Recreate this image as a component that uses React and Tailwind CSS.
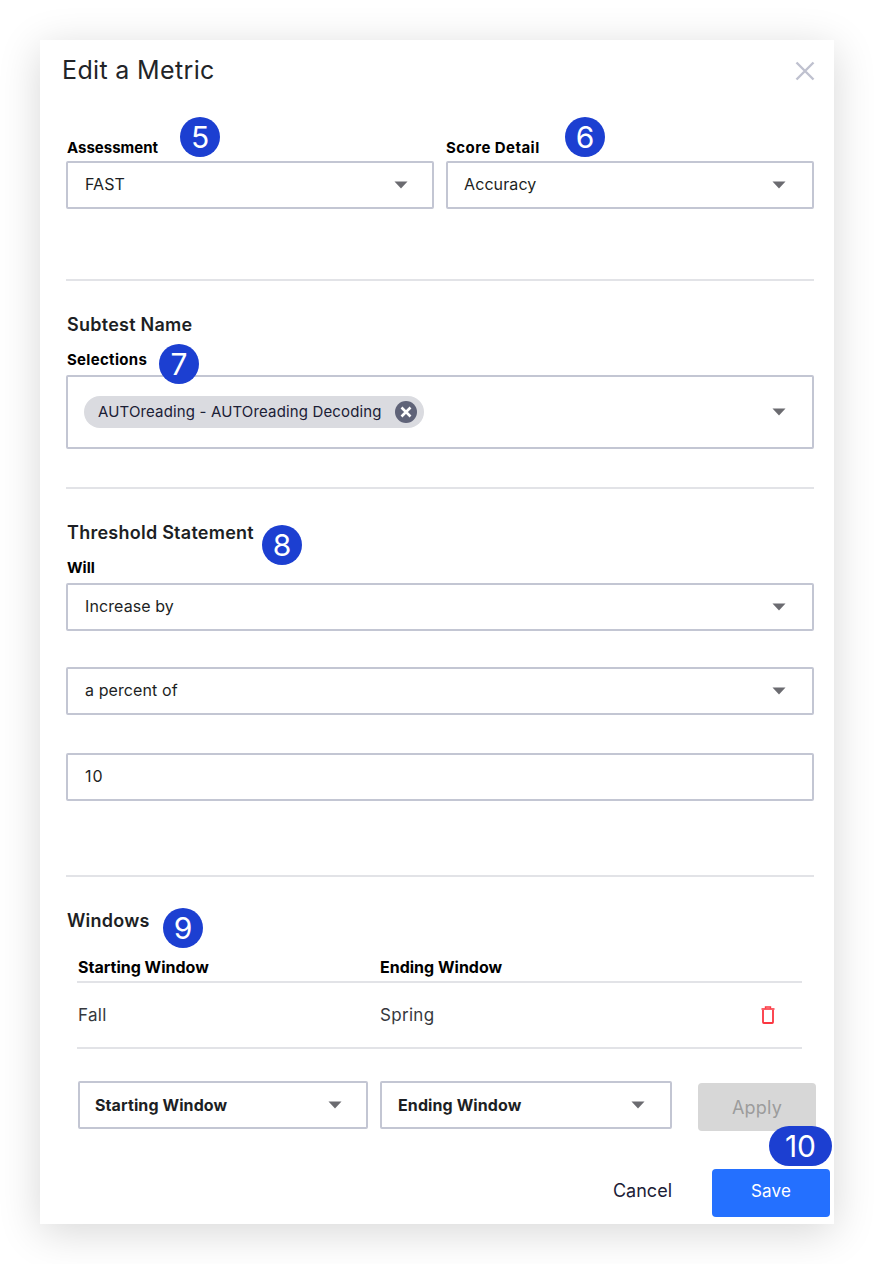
const font = "font-['Inter','Noto_Sans',sans-serif]";
const labelCls = "relative block text-[15px] font-bold leading-[18px] text-black";
const headCls = "pl-px text-[18px] font-semibold leading-5 tracking-[0.25px] text-[#1d1f24]";

function Caret() {
  return (
    <svg width="14" height="8" viewBox="0 0 14 8" className="shrink-0" aria-hidden="true">
      <path d="M0.5 0.5H13.5L7 7.5Z" fill="#6b6b70" />
    </svg>
  );
}

function Select({ value, bold = false, className = "" }) {
  return (
    <div className={`flex h-12 shrink-0 items-center justify-between rounded-[2px] border-2 border-[#c3c6d3] bg-white ${className}`}>
      {bold ? (
        <span className="relative text-[16px] font-bold tracking-[0.1px] text-[#1d1f24]">{value}</span>
      ) : (
        <span className="relative top-[-1px] text-[16px] tracking-[0.1px] text-[#1d1f24]">{value}</span>
      )}
      <Caret />
    </div>
  );
}

function Badge({ n, className = "" }) {
  return (
    <span className={`absolute flex h-10 items-center justify-center rounded-full bg-[#1c3fd1] text-[30px] leading-none text-white ${n === 10 ? "w-[63px]" : "w-10"} ${className}`}>
      {n}
    </span>
  );
}

function Divider({ className = "" }) {
  return <div className={`h-[2px] bg-[#e2e3e7] ${className}`} />;
}

export default function App() {
  return (
    <div className={`h-[1264px] w-[874px] overflow-hidden bg-white pl-10 pt-10 ${font}`}>
      <div className="relative h-[1184px] w-[794px] bg-white shadow-[0_8px_40px_rgba(0,0,0,0.16)]">
        <header className="flex h-[61px] items-center justify-between pl-[22px] pr-[19px]">
          <h1 className="text-[25px] font-normal tracking-[0.35px] text-[#222428]">Edit a Metric</h1>
          <svg width="20" height="20" viewBox="0 0 20 20" aria-label="Close">
            <path d="M1.5 1.5L18.5 18.5M18.5 1.5L1.5 18.5" stroke="#bfc1cf" strokeWidth="2.4" />
          </svg>
        </header>

        <div className="pl-[26px] pr-5">
          <div className="mt-[38px] grid grid-cols-[368px_368px] gap-3">
            <div>
              <label className={`mb-[4px] pl-px ${labelCls}`}>Assessment</label>
              <Select value="FAST" className="pl-[17px] pr-6" />
            </div>
            <div>
              <label className={`mb-[4px] tracking-[0.45px] ${labelCls}`}>Score Detail</label>
              <Select value="Accuracy" className="pl-4 pr-[26px]" />
            </div>
          </div>

          <Divider className="mt-[70px]" />

          <h2 className={`mt-[34px] ${headCls}`}>Subtest Name</h2>
          <label className={`mt-4 mb-[6px] pl-px tracking-[0.3px] ${labelCls}`}>Selections</label>
          <div className="flex h-[74px] items-center justify-between rounded-[2px] border-2 border-[#c3c6d3] pl-4 pr-[26px]">
            <span className="relative flex h-8 items-center gap-[13px] rounded-full bg-[#dadbe0] pl-[14px] pr-[7px] text-[15px] tracking-[0.15px] text-[#1b2036]">
              AUTOreading - AUTOreading Decoding
              <svg width="22" height="22" viewBox="0 0 22 22" aria-label="Remove">
                <circle cx="11" cy="11" r="11" fill="#5f6378" />
                <path d="M6.5 6.5L15.5 15.5M15.5 6.5L6.5 15.5" stroke="#fff" strokeWidth="2.6" />
              </svg>
            </span>
            <Caret />
          </div>

          <Divider className="mt-[38px]" />

          <h2 className={`mt-[34px] ${headCls}`}>Threshold Statement</h2>
          <label className={`mt-4 mb-[6px] pl-px ${labelCls}`}>Will</label>
          <Select value="Increase by" className="pl-[17px] pr-[26px]" />
          <Select value="a percent of" className="mt-9 pl-[17px] pr-[26px]" />
          <div className="mt-[38px] flex h-12 items-center rounded-[2px] border-2 border-[#c3c6d3] pl-[17px]">
            <span className="relative top-[-1px] text-[16px] tracking-[1px] text-[#1d1f24]">10</span>
          </div>

          <Divider className="mt-[74px]" />

          <h2 className={`mt-[34px] ${headCls}`}>Windows</h2>

          <div className="ml-[11px] mr-[12px] mt-[24px]">
            <div className="grid h-[15px] grid-cols-[302px_1fr] items-center pl-px text-[16px] font-bold text-black">
              <span>Starting Window</span>
              <span>Ending Window</span>
            </div>
            <Divider className="mt-[11px]" />
            <div className="grid h-[64px] grid-cols-[302px_1fr_auto] items-center pl-px pr-[27px] text-[17px] tracking-[0.3px] text-[#36383d]">
              <span className="relative top-px">Fall</span>
              <span className="relative top-px">Spring</span>
              <svg width="14" height="18" viewBox="0 0 14 18" fill="none" aria-label="Delete">
                <path d="M0.5 3H13.5" stroke="#fb3640" strokeWidth="1.6" />
                <path d="M4.5 2.6V1H9.5V2.6" stroke="#fb3640" strokeWidth="1.4" />
                <path d="M2 4V16.2C2 16.7 2.3 17 2.8 17H11.2C11.7 17 12 16.7 12 16.2V4" stroke="#fb3640" strokeWidth="1.8" />
              </svg>
            </div>
            <Divider />
          </div>

          <div className="ml-3 mt-8 flex items-start">
            <Select value="Starting Window" bold className="w-[290px] pl-[15px] pr-6" />
            <Select value="Ending Window" bold className="ml-3 w-[292px] pl-[16px] pr-[25px]" />
            <button className="ml-[26px] mt-[2px] h-12 w-[118px] shrink-0 rounded-[4px] bg-[#d7d7d7] text-[18px] tracking-[0.2px] text-[#9c9c9c]">Apply</button>
          </div>

          <div className="mr-[-16px] mt-[38px] flex items-center justify-end">
            <button className="relative top-[-3px] mr-10 text-[18px] text-[#1b2036]">Cancel</button>
            <button className="h-12 w-[118px] rounded-[4px] bg-[#2470ff] pb-[3px] text-[17px] tracking-[0.2px] text-white">Save</button>
          </div>
        </div>

        <Badge n={5} className="left-[140px] top-[77px]" />
        <Badge n={6} className="left-[525px] top-[77px]" />
        <Badge n={7} className="left-[119px] top-[304px]" />
        <Badge n={8} className="left-[222px] top-[485px]" />
        <Badge n={9} className="left-[123px] top-[868px]" />
        <Badge n={10} className="left-[729px] top-[1086px]" />
      </div>
    </div>
  );
}
